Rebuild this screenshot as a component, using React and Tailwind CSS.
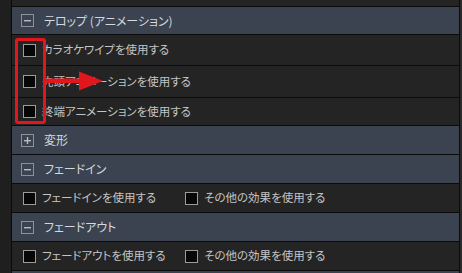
import React from 'react'

const FONT = "font-['Noto_Sans_CJK_JP',sans-serif] [font-feature-settings:'palt']"

function Box({ sign }) {
  return (
    <svg width="13" height="13" viewBox="0 0 13 13" className="shrink-0">
      <rect x="0.5" y="0.5" width="12" height="12" fill="none" stroke="#8e9298" />
      <rect x="3" y="6" width="7" height="1.4" fill="#b8bcc2" />
      {sign === '+' && <rect x="5.8" y="3" width="1.4" height="7" fill="#b8bcc2" />}
    </svg>
  )
}

function Check() {
  return <span className="block w-[13px] h-[13px] shrink-0 bg-[#070707] border border-[#9c9c9c]" />
}

function Header({ label, sign = '-', h = 'h-[29px]' }) {
  return (
    <div className={`${h} shrink-0 flex items-center gap-[10px] pl-[9px] bg-[#3b4351] border-b border-[#0b0b0b]`}>
      <Box sign={sign} />
      <span className="text-[12px] text-[#d6d8db] leading-none">{label}</span>
    </div>
  )
}

function Row({ items, h = 'h-[29px]' }) {
  return (
    <div className={`${h} shrink-0 flex items-center pl-[11px] bg-[#242424] border-b border-[#0b0b0b]`}>
      {items.map((t, i) => (
        <div key={i} className={`flex items-center gap-[6px] ${i === 0 && items.length > 1 ? 'w-[162px]' : ''}`}>
          <Check />
          <span className="text-[11.5px] text-[#c4c4c4] leading-none whitespace-nowrap">{t}</span>
        </div>
      ))}
    </div>
  )
}

export default function App() {
  return (
    <div className={`relative flex w-[462px] h-[273px] overflow-hidden bg-[#1e1e1e] ${FONT}`}>
      <div className="w-[12px] shrink-0 bg-[#1f1f1f] border-r border-[#0b0b0b]" />

      <div className="flex-1 flex flex-col overflow-hidden">
        <div className="h-[7px] shrink-0 bg-[#242424] border-b border-[#0b0b0b]" />
        <Header label="テロップ (アニメーション)" h="h-[28px]" />
        <Row items={['カラオケワイプを使用する']} h="h-[31px]" />
        <Row items={['先頭アニメーションを使用する']} h="h-[32px]" />
        <Row items={['終端アニメーションを使用する']} h="h-[28px]" />
        <Header label="変形" sign="+" />
        <Header label="フェードイン" />
        <Row items={['フェードインを使用する', 'その他の効果を使用する']} />
        <Header label="フェードアウト" />
        <Row items={['フェードアウトを使用する', 'その他の効果を使用する']} />
        <div className="h-[29px] shrink-0 bg-[#3b4351]" />
      </div>

      <div className="w-[3px] shrink-0 bg-[#2a2a2a] border-l border-[#0b0b0b]" />

      {/* red annotation */}
      <div className="absolute left-[15px] top-[38px] w-[31px] h-[86px] border-[3px] border-[#e2171d] rounded-[3px]" />
      <svg className="absolute left-[44px] top-[70px]" width="62" height="24" viewBox="0 0 62 24">
        <rect x="0" y="8.5" width="38" height="4.5" fill="#e2171d" />
        <polygon points="35,1.5 59,11 35,20.5" fill="#e2171d" />
      </svg>
    </div>
  )
}
